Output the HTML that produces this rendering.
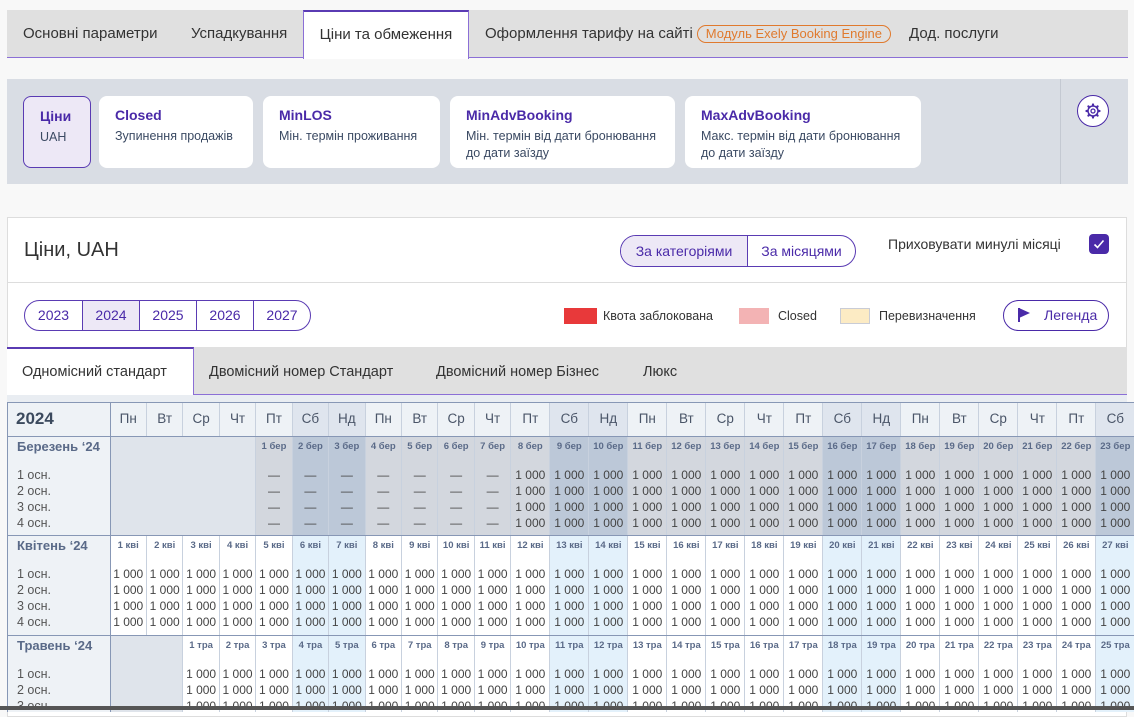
<!DOCTYPE html>
<html><head><meta charset="utf-8"><style>
*{box-sizing:border-box;margin:0;padding:0}
body{width:1134px;height:710px;overflow:hidden;background:#f8f8f8;font-family:"Liberation Sans",sans-serif;position:relative;color:#333}
.abs{position:absolute}
.tabs{left:7px;top:10px;width:1121px;height:48px;background:#e0e0e0;border-bottom:1px solid #8b6fd6}
.tab{position:absolute;top:0;height:48px;line-height:48px;font-size:15px;color:#333}
.tab.act{background:#fff;border-top:2px solid #5a3bb3;border-left:1px solid #8b6fd6;border-right:1px solid #8b6fd6;height:49px;line-height:46px;text-align:center}
.badge{display:inline-block;border:1px solid #e07a2e;color:#e07a2e;border-radius:9px;font-size:13px;line-height:16px;padding:0 8px;margin-left:4px}
.panel{left:7px;top:79px;width:1121px;height:105px;background:#d9dde4}
.card{position:absolute;top:17px;height:72px;background:#fff;border-radius:8px;padding:11px 16px}
.card b{display:block;color:#4a2aa8;font-size:14px;margin-bottom:5px}
.card span{display:block;font-size:12.5px;color:#3b4a63;line-height:17px}
.main{left:7px;top:217px;width:1120px;height:500px;background:#fff;border:1px solid #ddd}
.pill{position:absolute;border:1px solid #5a3bb3;border-radius:16px;display:flex;overflow:hidden}
.pill div{color:#4a2aa8;text-align:center;border-left:1px solid #5a3bb3}
.pill div:first-child{border-left:none}
.sel{background:#ede8f6}
.grid{left:7px;top:402px;width:1127px;height:310px;overflow:hidden;border-left:1px solid #8797b5;border-top:1px solid #8797b5}
table{border-collapse:collapse;table-layout:fixed;width:1127px}
td{border-right:1px solid #c8d1de;text-align:center;vertical-align:top;overflow:hidden;white-space:nowrap;padding:0}
tr.h td{height:33px;line-height:32px;background:#eef2f6;font-size:13.5px;color:#4a5568;border-bottom:1px solid #8797b5}
tr.h td.we{background:#dfe5ee}
tr.d td{height:20px;line-height:20px;font-size:9.5px;font-weight:bold;color:#5a6a88}
tr.v td{height:79px;line-height:16px;padding-top:10px;font-size:12px;color:#444;border-bottom:1px solid #8797b5}
td.lab{background:#eef2f6;border-right:1px solid #8797b5;text-align:left;padding-left:9px;color:#3c4a5e}
tr.d td.lab{font-size:13px;line-height:20px}
tr.v td.lab{font-size:12.5px;font-weight:normal;color:#555}
td.e{background:#dfe4eb;border-right-color:#dfe4eb}
td.e.l{border-right-color:#c8d1de}
td.p{background:#d3d7de}
td.pw{background:#bcc8d8}
td.w{background:#e3f1fb}
td.dd{color:#99a}
tr.h td.y{font-size:17px;font-weight:bold;text-align:left;padding-left:8px;color:#3c4a5e;border-right:1px solid #8797b5}
</style></head><body>
<div class="abs tabs">
<div class="tab" style="left:16px">Основні параметри</div>
<div class="tab" style="left:184px">Успадкування</div>
<div class="tab act" style="left:296px;width:166px">Ціни та обмеження</div>
<div class="tab" style="left:478px">Оформлення тарифу на сайті<span class="badge">Модуль Exely Booking Engine</span></div>
<div class="tab" style="left:902px">Дод. послуги</div>
</div>
<div class="abs panel">
<div class="card" style="left:16px;width:68px;background:#ede8f6;border:1px solid #5a3bb3"><b>Ціни</b><span>UAH</span></div>
<div class="card" style="left:92px;width:154px"><b>Closed</b><span>Зупинення продажів</span></div>
<div class="card" style="left:256px;width:177px"><b>MinLOS</b><span>Мін. термін проживання</span></div>
<div class="card" style="left:443px;width:225px"><b>MinAdvBooking</b><span>Мін. термін від дати бронювання до дати заїзду</span></div>
<div class="card" style="left:678px;width:236px"><b>MaxAdvBooking</b><span>Макс. термін від дати бронювання до дати заїзду</span></div>
<div class="abs" style="left:1053px;top:0;width:1px;height:105px;background:#c4c9d2"></div>
<div class="abs" style="left:1070px;top:16px;width:32px;height:32px;border:1px solid #4a2aa8;border-radius:50%;background:#fff">
<svg width="30" height="30" viewBox="0 0 30 30" style="position:absolute;left:0;top:0"><circle cx="15" cy="15" r="5" fill="none" stroke="#4a2aa8" stroke-width="1.5"/><circle cx="15" cy="15" r="2" fill="none" stroke="#4a2aa8" stroke-width="1.3"/><g stroke="#4a2aa8" stroke-width="2.2" stroke-linecap="round"><path d="M15 9v-0.5M15 21v0.5M9 15h-0.5M21 15h0.5M10.8 10.8l-.4-.4M19.2 19.2l.4.4M10.8 19.2l-.4.4M19.2 10.8l.4-.4"/></g></svg></div>
</div>
<div class="abs main">
<div class="abs" style="left:16px;top:21px;font-size:20px;color:#333">Ціни, UAH</div>
<div class="pill" style="left:612px;top:17px;height:32px;line-height:30px;font-size:14px"><div class="sel" style="width:126px">За категоріями</div><div style="width:108px">За місяцями</div></div>
<div class="abs" style="left:880px;top:17px;font-size:14px;line-height:18px;color:#333">Приховувати минулі місяці</div>
<div class="abs" style="left:1081px;top:16px;width:20px;height:20px;background:#4a2aa8;border-radius:4px"><svg width="20" height="20"><path d="M5.5 10.5l3 3 6-7" fill="none" stroke="#fff" stroke-width="1.6"/></svg></div>
<div class="abs" style="left:0;top:64px;width:1118px;height:1px;background:#ddd"></div>
<div class="pill" style="left:16px;top:82px;height:31px;line-height:29px;font-size:14px"><div style="width:57px">2023</div><div class="sel" style="width:57px">2024</div><div style="width:57px">2025</div><div style="width:57px">2026</div><div style="width:57px">2027</div></div>
<div class="abs" style="left:556px;top:90px;width:33px;height:16px;background:#e8393a"></div>
<div class="abs" style="left:595px;top:90px;font-size:12.5px;line-height:16px">Квота заблокована</div>
<div class="abs" style="left:731px;top:90px;width:30px;height:16px;background:#f3b3b4"></div>
<div class="abs" style="left:770px;top:90px;font-size:12.5px;line-height:16px">Closed</div>
<div class="abs" style="left:832px;top:90px;width:30px;height:16px;background:#fcebc4;border:1px solid #c9ccd6"></div>
<div class="abs" style="left:871px;top:90px;font-size:12.5px;line-height:16px">Перевизначення</div>
<div class="abs" style="left:995px;top:82px;width:106px;height:31px;border:1px solid #4a2aa8;border-radius:16px;color:#4a2aa8;font-size:14px;line-height:29px;padding-left:40px"><svg width="14" height="16" style="position:absolute;left:13px;top:6px"><path d="M2 1v14" stroke="#4a2aa8" stroke-width="2"/><path d="M2 1l11 5-11 5z" fill="#4a2aa8"/></svg>Легенда</div>
<div class="abs" style="left:-1px;top:129px;width:1120px;height:48px;background:#e0e0e0;border-bottom:1px solid #8b6fd6"></div>
<div class="abs" style="left:-1px;top:129px;width:187px;height:49px;background:#fff;border-top:2px solid #5a3bb3;border-right:1px solid #8b6fd6;font-size:14.5px;line-height:46px;padding-left:15px">Одномісний стандарт</div>
<div class="abs" style="left:201px;top:131px;font-size:14.5px;line-height:46px">Двомісний номер Стандарт</div>
<div class="abs" style="left:428px;top:131px;font-size:14.5px;line-height:46px">Двомісний номер Бізнес</div>
<div class="abs" style="left:635px;top:131px;font-size:14.5px;line-height:46px">Люкс</div>
<div class="abs" style="left:-1px;top:177px;width:1120px;height:8px;background:#e9edf2"></div>
</div>
<div class="abs grid"><table>
<colgroup><col style="width:102px"><col span="11" style="width:36.45px"><col span="16" style="width:39px"></colgroup>
<tr class="h"><td class="y">2024</td><td>Пн</td><td>Вт</td><td>Ср</td><td>Чт</td><td>Пт</td><td class="we">Сб</td><td class="we">Нд</td><td>Пн</td><td>Вт</td><td>Ср</td><td>Чт</td><td>Пт</td><td class="we">Сб</td><td class="we">Нд</td><td>Пн</td><td>Вт</td><td>Ср</td><td>Чт</td><td>Пт</td><td class="we">Сб</td><td class="we">Нд</td><td>Пн</td><td>Вт</td><td>Ср</td><td>Чт</td><td>Пт</td><td class="we">Сб</td></tr>
<tr class="d"><td class="lab">Березень ‘24</td><td class="e"></td><td class="e"></td><td class="e"></td><td class="e l"></td><td class="p">1 бер</td><td class="pw">2 бер</td><td class="pw">3 бер</td><td class="p">4 бер</td><td class="p">5 бер</td><td class="p">6 бер</td><td class="p">7 бер</td><td class="p">8 бер</td><td class="pw">9 бер</td><td class="pw">10 бер</td><td class="p">11 бер</td><td class="p">12 бер</td><td class="p">13 бер</td><td class="p">14 бер</td><td class="p">15 бер</td><td class="pw">16 бер</td><td class="pw">17 бер</td><td class="p">18 бер</td><td class="p">19 бер</td><td class="p">20 бер</td><td class="p">21 бер</td><td class="p">22 бер</td><td class="pw">23 бер</td></tr>
<tr class="v"><td class="lab">1 осн.<br>2 осн.<br>3 осн.<br>4 осн.</td><td class="e"></td><td class="e"></td><td class="e"></td><td class="e l"></td><td class="p dd">—<br>—<br>—<br>—</td><td class="pw dd">—<br>—<br>—<br>—</td><td class="pw dd">—<br>—<br>—<br>—</td><td class="p dd">—<br>—<br>—<br>—</td><td class="p dd">—<br>—<br>—<br>—</td><td class="p dd">—<br>—<br>—<br>—</td><td class="p dd">—<br>—<br>—<br>—</td><td class="p">1 000<br>1 000<br>1 000<br>1 000</td><td class="pw">1 000<br>1 000<br>1 000<br>1 000</td><td class="pw">1 000<br>1 000<br>1 000<br>1 000</td><td class="p">1 000<br>1 000<br>1 000<br>1 000</td><td class="p">1 000<br>1 000<br>1 000<br>1 000</td><td class="p">1 000<br>1 000<br>1 000<br>1 000</td><td class="p">1 000<br>1 000<br>1 000<br>1 000</td><td class="p">1 000<br>1 000<br>1 000<br>1 000</td><td class="pw">1 000<br>1 000<br>1 000<br>1 000</td><td class="pw">1 000<br>1 000<br>1 000<br>1 000</td><td class="p">1 000<br>1 000<br>1 000<br>1 000</td><td class="p">1 000<br>1 000<br>1 000<br>1 000</td><td class="p">1 000<br>1 000<br>1 000<br>1 000</td><td class="p">1 000<br>1 000<br>1 000<br>1 000</td><td class="p">1 000<br>1 000<br>1 000<br>1 000</td><td class="pw">1 000<br>1 000<br>1 000<br>1 000</td></tr>
<tr class="d"><td class="lab">Квітень ‘24</td><td>1 кві</td><td>2 кві</td><td>3 кві</td><td>4 кві</td><td>5 кві</td><td class="w">6 кві</td><td class="w">7 кві</td><td>8 кві</td><td>9 кві</td><td>10 кві</td><td>11 кві</td><td>12 кві</td><td class="w">13 кві</td><td class="w">14 кві</td><td>15 кві</td><td>16 кві</td><td>17 кві</td><td>18 кві</td><td>19 кві</td><td class="w">20 кві</td><td class="w">21 кві</td><td>22 кві</td><td>23 кві</td><td>24 кві</td><td>25 кві</td><td>26 кві</td><td class="w">27 кві</td></tr>
<tr class="v"><td class="lab">1 осн.<br>2 осн.<br>3 осн.<br>4 осн.</td><td>1 000<br>1 000<br>1 000<br>1 000</td><td>1 000<br>1 000<br>1 000<br>1 000</td><td>1 000<br>1 000<br>1 000<br>1 000</td><td>1 000<br>1 000<br>1 000<br>1 000</td><td>1 000<br>1 000<br>1 000<br>1 000</td><td class="w">1 000<br>1 000<br>1 000<br>1 000</td><td class="w">1 000<br>1 000<br>1 000<br>1 000</td><td>1 000<br>1 000<br>1 000<br>1 000</td><td>1 000<br>1 000<br>1 000<br>1 000</td><td>1 000<br>1 000<br>1 000<br>1 000</td><td>1 000<br>1 000<br>1 000<br>1 000</td><td>1 000<br>1 000<br>1 000<br>1 000</td><td class="w">1 000<br>1 000<br>1 000<br>1 000</td><td class="w">1 000<br>1 000<br>1 000<br>1 000</td><td>1 000<br>1 000<br>1 000<br>1 000</td><td>1 000<br>1 000<br>1 000<br>1 000</td><td>1 000<br>1 000<br>1 000<br>1 000</td><td>1 000<br>1 000<br>1 000<br>1 000</td><td>1 000<br>1 000<br>1 000<br>1 000</td><td class="w">1 000<br>1 000<br>1 000<br>1 000</td><td class="w">1 000<br>1 000<br>1 000<br>1 000</td><td>1 000<br>1 000<br>1 000<br>1 000</td><td>1 000<br>1 000<br>1 000<br>1 000</td><td>1 000<br>1 000<br>1 000<br>1 000</td><td>1 000<br>1 000<br>1 000<br>1 000</td><td>1 000<br>1 000<br>1 000<br>1 000</td><td class="w">1 000<br>1 000<br>1 000<br>1 000</td></tr>
<tr class="d"><td class="lab">Травень ‘24</td><td class="e"></td><td class="e l"></td><td>1 тра</td><td>2 тра</td><td>3 тра</td><td class="w">4 тра</td><td class="w">5 тра</td><td>6 тра</td><td>7 тра</td><td>8 тра</td><td>9 тра</td><td>10 тра</td><td class="w">11 тра</td><td class="w">12 тра</td><td>13 тра</td><td>14 тра</td><td>15 тра</td><td>16 тра</td><td>17 тра</td><td class="w">18 тра</td><td class="w">19 тра</td><td>20 тра</td><td>21 тра</td><td>22 тра</td><td>23 тра</td><td>24 тра</td><td class="w">25 тра</td></tr>
<tr class="v"><td class="lab">1 осн.<br>2 осн.<br>3 осн.<br>4 осн.</td><td class="e"></td><td class="e l"></td><td>1 000<br>1 000<br>1 000<br>1 000</td><td>1 000<br>1 000<br>1 000<br>1 000</td><td>1 000<br>1 000<br>1 000<br>1 000</td><td class="w">1 000<br>1 000<br>1 000<br>1 000</td><td class="w">1 000<br>1 000<br>1 000<br>1 000</td><td>1 000<br>1 000<br>1 000<br>1 000</td><td>1 000<br>1 000<br>1 000<br>1 000</td><td>1 000<br>1 000<br>1 000<br>1 000</td><td>1 000<br>1 000<br>1 000<br>1 000</td><td>1 000<br>1 000<br>1 000<br>1 000</td><td class="w">1 000<br>1 000<br>1 000<br>1 000</td><td class="w">1 000<br>1 000<br>1 000<br>1 000</td><td>1 000<br>1 000<br>1 000<br>1 000</td><td>1 000<br>1 000<br>1 000<br>1 000</td><td>1 000<br>1 000<br>1 000<br>1 000</td><td>1 000<br>1 000<br>1 000<br>1 000</td><td>1 000<br>1 000<br>1 000<br>1 000</td><td class="w">1 000<br>1 000<br>1 000<br>1 000</td><td class="w">1 000<br>1 000<br>1 000<br>1 000</td><td>1 000<br>1 000<br>1 000<br>1 000</td><td>1 000<br>1 000<br>1 000<br>1 000</td><td>1 000<br>1 000<br>1 000<br>1 000</td><td>1 000<br>1 000<br>1 000<br>1 000</td><td>1 000<br>1 000<br>1 000<br>1 000</td><td class="w">1 000<br>1 000<br>1 000<br>1 000</td></tr>
</table></div>
<div class="abs" style="left:0;top:706px;width:1134px;height:4px;background:#555"></div>
</body></html>
